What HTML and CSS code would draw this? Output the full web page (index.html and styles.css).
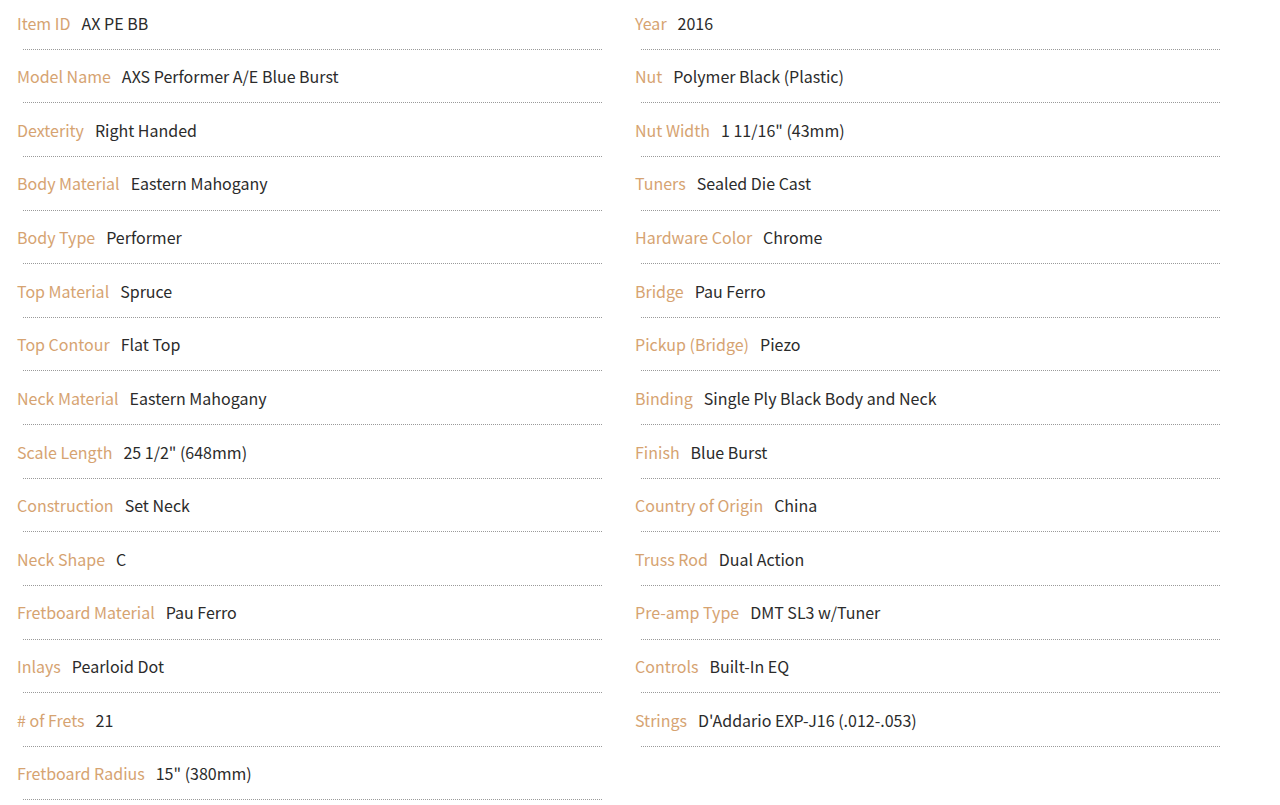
FILE: index.html
```html
<!DOCTYPE html>
<html lang="en">
<head>
<meta charset="utf-8">
<title>Specifications</title>
<link rel="stylesheet" href="styles.css">
</head>
<body>
<div class="specs">
  <ul class="col">
    <li class="row"><span class="label">Item ID</span><span class="value">AX PE BB</span></li>
    <li class="row"><span class="label">Model Name</span><span class="value">AXS Performer A/E Blue Burst</span></li>
    <li class="row"><span class="label">Dexterity</span><span class="value">Right Handed</span></li>
    <li class="row"><span class="label">Body Material</span><span class="value">Eastern Mahogany</span></li>
    <li class="row"><span class="label">Body Type</span><span class="value">Performer</span></li>
    <li class="row"><span class="label">Top Material</span><span class="value">Spruce</span></li>
    <li class="row"><span class="label">Top Contour</span><span class="value">Flat Top</span></li>
    <li class="row"><span class="label">Neck Material</span><span class="value">Eastern Mahogany</span></li>
    <li class="row"><span class="label">Scale Length</span><span class="value">25 1/2" (648mm)</span></li>
    <li class="row"><span class="label">Construction</span><span class="value">Set Neck</span></li>
    <li class="row"><span class="label">Neck Shape</span><span class="value">C</span></li>
    <li class="row"><span class="label">Fretboard Material</span><span class="value">Pau Ferro</span></li>
    <li class="row"><span class="label">Inlays</span><span class="value">Pearloid Dot</span></li>
    <li class="row"><span class="label"># of Frets</span><span class="value">21</span></li>
    <li class="row"><span class="label">Fretboard Radius</span><span class="value">15" (380mm)</span></li>
  </ul>
  <ul class="col">
    <li class="row"><span class="label">Year</span><span class="value">2016</span></li>
    <li class="row"><span class="label">Nut</span><span class="value">Polymer Black (Plastic)</span></li>
    <li class="row"><span class="label">Nut Width</span><span class="value">1 11/16" (43mm)</span></li>
    <li class="row"><span class="label">Tuners</span><span class="value">Sealed Die Cast</span></li>
    <li class="row"><span class="label">Hardware Color</span><span class="value">Chrome</span></li>
    <li class="row"><span class="label">Bridge</span><span class="value">Pau Ferro</span></li>
    <li class="row"><span class="label">Pickup (Bridge)</span><span class="value">Piezo</span></li>
    <li class="row"><span class="label">Binding</span><span class="value">Single Ply Black Body and Neck</span></li>
    <li class="row"><span class="label">Finish</span><span class="value">Blue Burst</span></li>
    <li class="row"><span class="label">Country of Origin</span><span class="value">China</span></li>
    <li class="row"><span class="label">Truss Rod</span><span class="value">Dual Action</span></li>
    <li class="row"><span class="label">Pre-amp Type</span><span class="value">DMT SL3 w/Tuner</span></li>
    <li class="row"><span class="label">Controls</span><span class="value">Built-In EQ</span></li>
    <li class="row"><span class="label">Strings</span><span class="value">D'Addario EXP-J16 (.012-.053)</span></li>
  </ul>
</div>
</body>
</html>
```

FILE: styles.css
```css
html, body {
  margin: 0;
  padding: 0;
  background: #ffffff;
}

body {
  font-family: "Noto Sans CJK KR", "Noto Sans", sans-serif;
  font-size: 16px;
  color: #2b2b2b;
}

.specs {
  display: grid;
  grid-template-columns: 585px 585px;
  column-gap: 33px;
  padding-left: 17px;
  margin-top: -4px;
}

.col {
  list-style: none;
  margin: 0;
  padding: 0;
}

.row {
  position: relative;
  display: flex;
  align-items: baseline;
  height: 53.64px;
  box-sizing: border-box;
  padding-top: 15.6px;
  line-height: 22px;
}

.row::after {
  content: "";
  position: absolute;
  left: 6px;
  right: 0;
  bottom: 0;
  border-bottom: 1px dotted #9a9a9a;
}

.label {
  color: #d6a371;
  margin-right: 11px;
}

.value {
  color: #2b2b2b;
}
```
